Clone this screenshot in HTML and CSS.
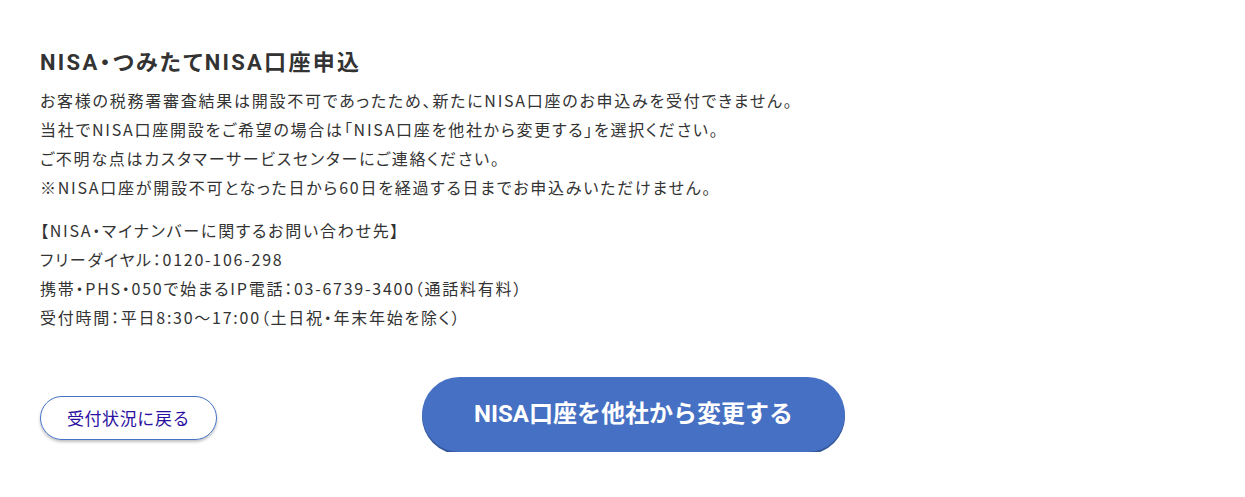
FILE: index.html
```html
<!DOCTYPE html>
<html lang="ja">
<head>
    <meta charset="UTF-8">
    <meta name="viewport" content="width=device-width, initial-scale=1.0">
    <title>NISA・つみたてNISA口座申込</title>
    <link rel="stylesheet" href="styles.css">
</head>
<body>
    <div class="container">
        <h1>NISA・つみたてNISA口座申込</h1>
        <p class="message">
            お客様の税務署審査結果は開設不可であったため、新たにNISA口座のお申込みを受付できません。<br>
            当社でNISA口座開設をご希望の場合は「NISA口座を他社から変更する」を選択ください。<br>
            ご不明な点はカスタマーサービスセンターにご連絡ください。<br>
            ※NISA口座が開設不可となった日から60日を経過する日までお申込みいただけません。
        </p>
        <p class="message">
            【NISA・マイナンバーに関するお問い合わせ先】<br>
            フリーダイヤル：0120-106-298<br>
            携帯・PHS・050で始まるIP電話：03-6739-3400（通話料有料）<br>
            受付時間：平日8:30～17:00（土日祝・年末年始を除く）
        </p>

        <div class="actions">
            <a href="#" class="btn-back">受付状況に戻る</a>
            <a href="#" class="btn-change">NISA口座を他社から変更する</a>
        </div>
    </div>
</body>
</html>
```

FILE: styles.css
```css
body {
    font-family: "Noto Sans CJK JP", "Noto Sans", sans-serif;
    margin: 0;
    padding: 0;
    background-color: #ffffff;
    color: #333;
}
.container {
    padding: 48px 40px 0 40px;
}
h1 {
    font-family: Roboto, "Noto Sans CJK JP", sans-serif;
    font-size: 22px;
    letter-spacing: 2.3px;
    font-weight: bold;
    color: #333;
    margin: 0 0 8px 0;
    line-height: 30px;
    font-feature-settings: "palt";
}
.message {
    font-size: 16px;
    letter-spacing: 1.75px;
    line-height: 29px;
    margin: 0 0 14px 0;
    font-feature-settings: "palt";
}
.actions {
    display: flex;
    align-items: flex-start;
    margin-top: 45px;
}
.btn-back {
    display: block;
    width: 175px;
    height: 42px;
    line-height: 42px;
    text-align: center;
    font-size: 17px;
    letter-spacing: 0.6px;
    color: #2a0fa0;
    text-decoration: none;
    border: 1px solid #4472c4;
    border-radius: 22px;
    box-shadow: 0 2px 3px rgba(0,0,0,0.25);
    margin-top: 19px;
}
.btn-change {
    display: block;
    width: 423px;
    height: 75px;
    line-height: 75px;
    margin-left: 205px;
    text-align: center;
    font-family: Roboto, "Noto Sans CJK JP", sans-serif;
    font-size: 24px;
    font-weight: bold;
    color: #ffffff;
    text-decoration: none;
    background-color: #4570c3;
    border-radius: 38px;
    box-shadow: 0 2px 0 #35579a;
}
```
